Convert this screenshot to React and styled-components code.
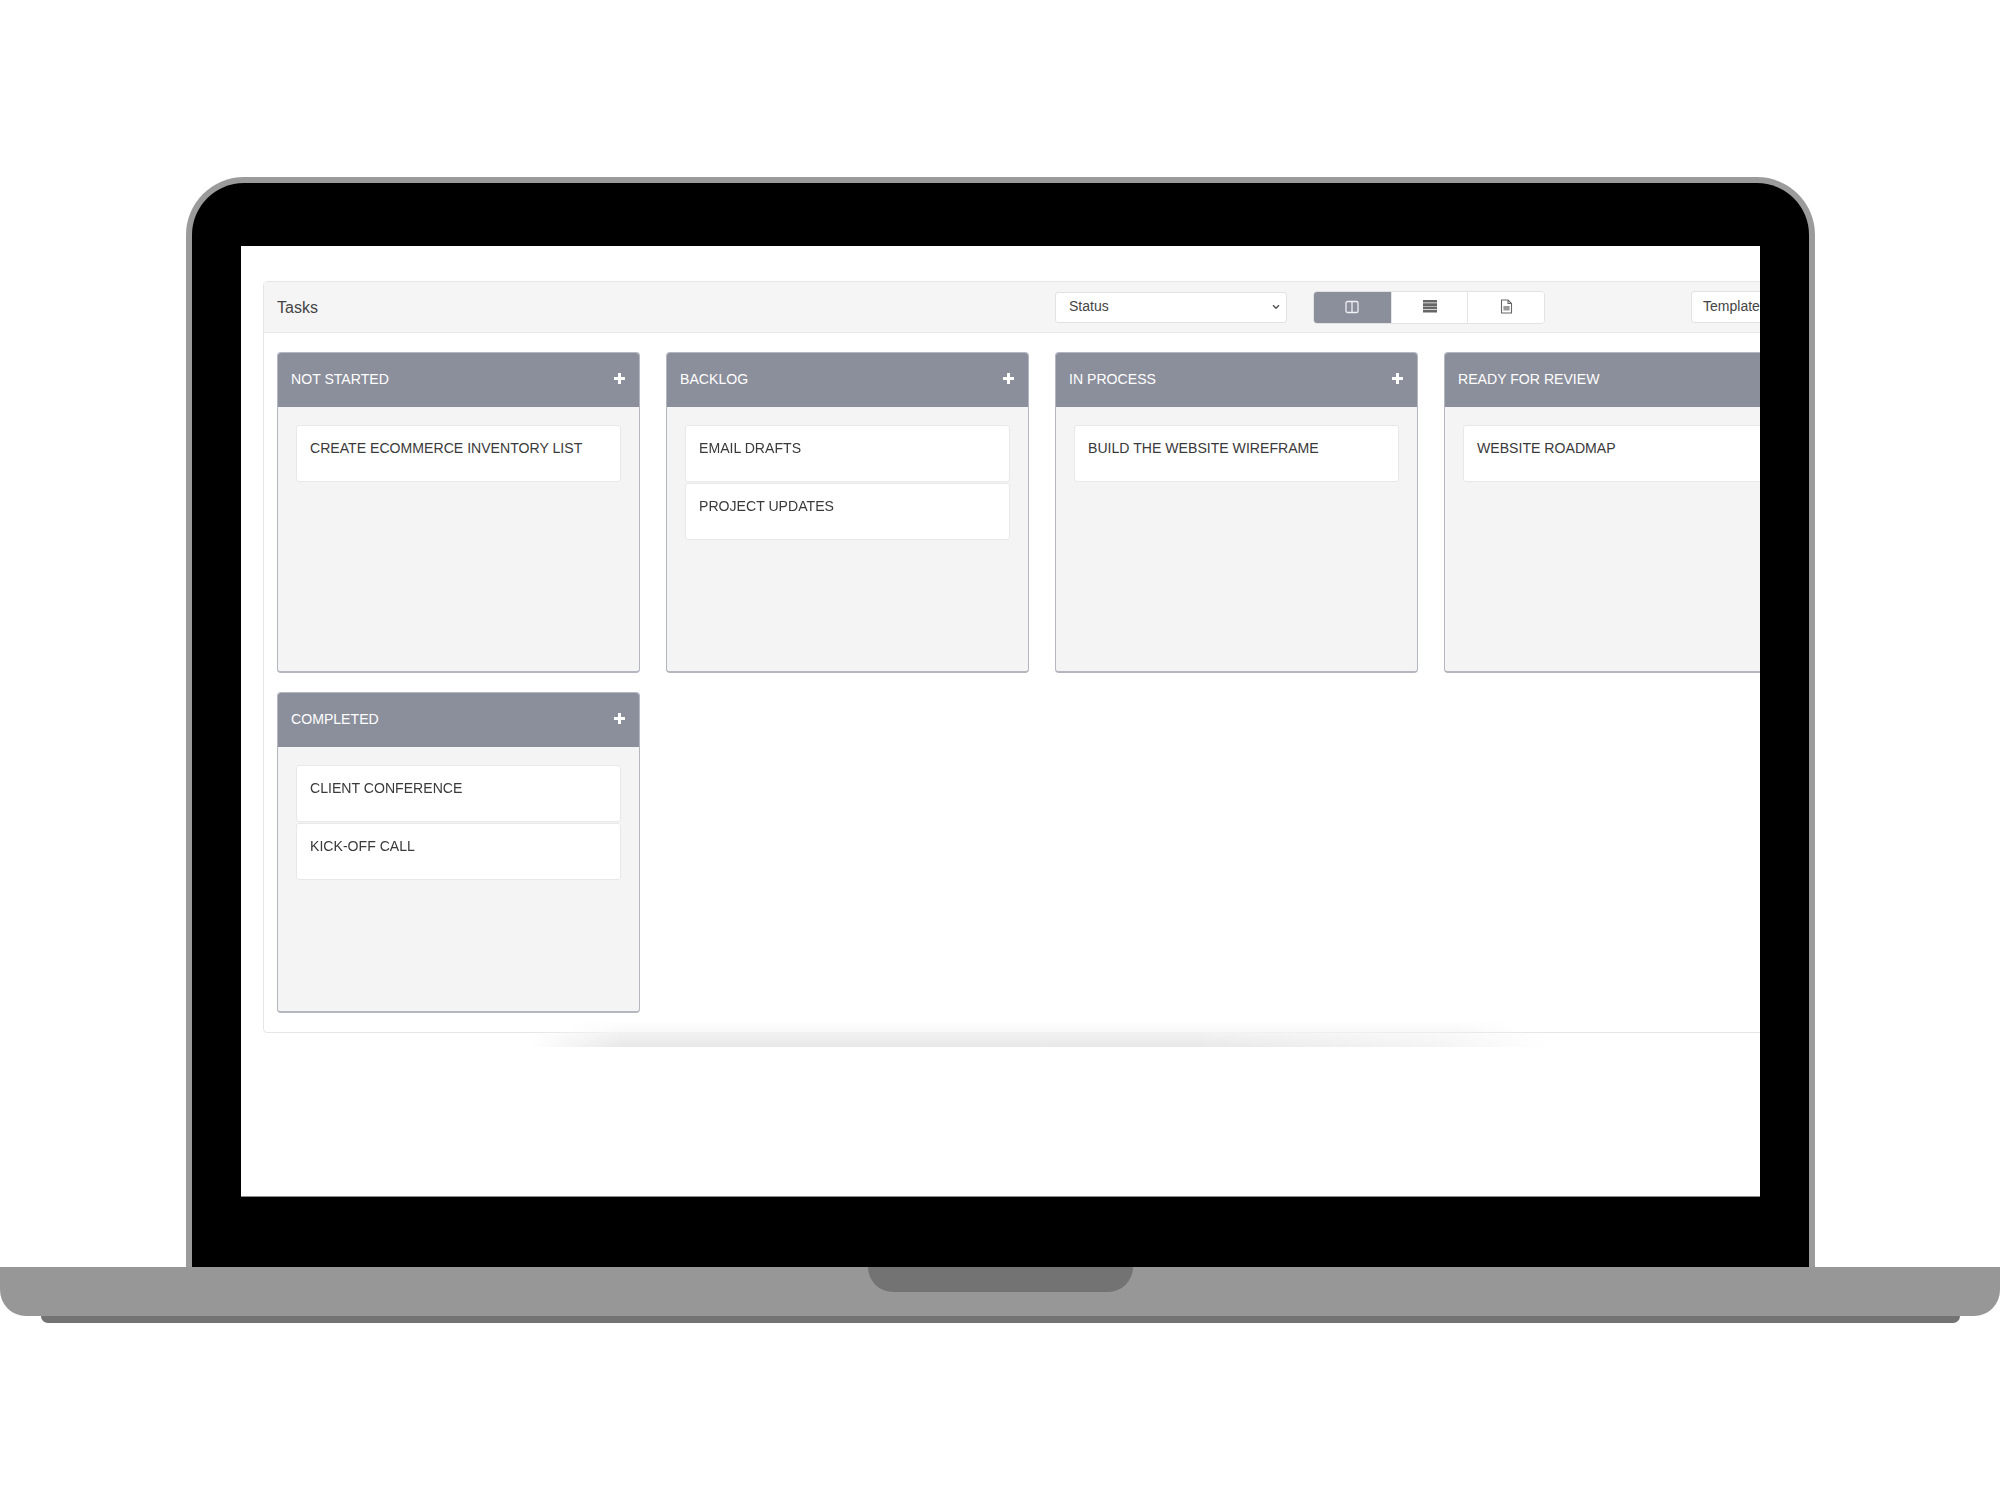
import React from 'react';
import styled, { createGlobalStyle } from 'styled-components';

const GlobalStyle = createGlobalStyle`
    html, body {
        margin: 0;
        padding: 0;
        background: #fff;
    }
    body {
        font-family: "Liberation Sans", Arial, sans-serif;
        color: #333;
    }
`;

const chevron = `url("data:image/svg+xml,%3Csvg xmlns='http://www.w3.org/2000/svg' width='8' height='6' viewBox='0 0 8 6'%3E%3Cpath d='M1 1.2l3 3 3-3' fill='none' stroke='%23555' stroke-width='1.5'/%3E%3C/svg%3E")`;

const Page = styled.div`
    width: 2000px;
    height: 1500px;
    padding-top: 177px;
    box-sizing: border-box;
    overflow: hidden;
`;
const Lid = styled.div`
    width: 1629px;
    height: 1090px;
    margin-left: 186px;
    box-sizing: border-box;
    padding: 63px 49px 0;
    background: #000;
    border: 6px solid #9b9b9b;
    border-bottom: 0;
    border-radius: 58px 58px 0 0;
`;
const Screen = styled.div`
    height: 951px;
    box-sizing: border-box;
    padding: 35px 0 0 22px;
    background: #fff;
    overflow: hidden;
    border-bottom: 1px solid #8d8d8d;
`;
const Panel = styled.section`
    position: relative;
    width: 1600px;
    box-sizing: border-box;
    border: 1px solid #e6e6e6;
    border-radius: 4px;
    filter: blur(0.35px);

    &::after {
        content: '';
        position: absolute;
        left: 266px;
        top: 100%;
        width: 1018px;
        height: 15px;
        background: linear-gradient(to bottom, #f3f3f3, #e8e8e8);
        mask-image: linear-gradient(to right, transparent, #000 9%, #000 65%, rgba(0, 0, 0, 0.45) 90%, transparent);
    }
    &::before {
        content: '';
        position: absolute;
        left: 300px;
        bottom: 0;
        width: 960px;
        height: 12px;
        background: linear-gradient(to bottom, transparent, #f8f8f8);
        mask-image: linear-gradient(to right, transparent, #000 7%, #000 93%, transparent);
    }
`;
const Toolbar = styled.header`
    display: flex;
    align-items: center;
    height: 50px;
    padding-left: 13px;
    background: #f5f5f5;
    border-bottom: 1px solid #e6e6e6;
`;
const Title = styled.h1`
    width: 778px;
    margin: 2px 0 0;
    font-size: 16px;
    font-weight: 400;
    color: #444;
`;
const StatusSelect = styled.select`
    width: 232px;
    height: 31px;
    padding: 0 6px 2px 13px;
    appearance: none;
    background: #fff ${chevron} no-repeat right 6px center;
    border: 1px solid #e2e2e2;
    border-radius: 3px;
    font-family: inherit;
    font-size: 14px;
    color: #444;
`;
const ViewGroup = styled.div`
    display: flex;
    margin-left: 26px;
    height: 31px;
    background: #fff;
    border: 1px solid #e2e2e2;
    border-radius: 4px;
    overflow: hidden;
`;
const ViewButton = styled.button`
    display: flex;
    align-items: center;
    justify-content: center;
    width: 76.7px;
    padding: 0 0 1px;
    border: 0;
    border-left: ${p => (p.$active ? '0' : '1px solid #e6e6e6')};
    background: ${p => (p.$active ? '#8b8e9b' : '#fff')};
    color: ${p => (p.$active ? '#eef0f4' : '#666')};
`;
const TemplateButton = styled.button`
    flex: none;
    width: 100px;
    height: 32px;
    margin-left: 146px;
    padding: 0 0 2px 11px;
    text-align: left;
    background: #fff;
    border: 1px solid #e2e2e2;
    border-radius: 3px;
    font-family: inherit;
    font-size: 14px;
    color: #444;
`;
const Board = styled.div`
    display: flex;
    flex-wrap: wrap;
    gap: 19.5px 26.5px;
    padding: 19px 13px 19.5px;
`;
const Column = styled.article`
    flex: none;
    width: 362.5px;
    height: 320.5px;
    box-sizing: border-box;
    background: #f4f4f4;
    border: 1px solid #b4b6c0;
    border-bottom-width: 2px;
    border-radius: 4px;
    overflow: hidden;
`;
const ColumnHead = styled.div`
    display: flex;
    align-items: center;
    justify-content: space-between;
    height: 55px;
    box-sizing: border-box;
    margin: -1px -1px 0;
    padding: 0 15px 2px 14px;
    background: #8b8e9b;
    font-size: 14.1px;
    color: #fff;
`;
const CardList = styled.div`
    display: flex;
    flex-direction: column;
    gap: 0.5px;
    padding: 18px 18px 0;
`;
const Card = styled.div`
    height: 57px;
    box-sizing: border-box;
    padding: 12px 13px 0;
    background: #fff;
    border: 1px solid #e8e8e8;
    border-radius: 3px;
    font-size: 14.1px;
    line-height: 20px;
    color: #3a3a3a;
`;
const Base = styled.div`
    display: flex;
    justify-content: center;
    height: 49px;
    background: #979797;
    border-radius: 0 0 26px 26px;
`;
const Notch = styled.div`
    width: 265px;
    height: 25px;
    background: #737373;
    border-radius: 0 0 25px 25px;
`;
const Foot = styled.div`
    height: 7px;
    margin: 0 40px 0 41px;
    background: #737373;
    border-radius: 0 0 7px 7px;
`;

const PlusIcon = () => (
    <svg width="11" height="11" viewBox="0 0 11 11" fill="none" stroke="#fff" strokeWidth="3">
        <path d="M5.5 0v11M0 5.5h11" />
    </svg>
);
const ColumnsIcon = () => (
    <svg width="14" height="14" viewBox="0 0 14 14" fill="none" stroke="currentColor" strokeWidth="1.3">
        <rect x="1" y="1.5" width="12" height="11" rx="1.6" />
        <path d="M7 1.5v11" />
    </svg>
);
const ListIcon = () => (
    <svg width="14" height="13" viewBox="0 0 14 13" fill="currentColor">
        <path d="M0 0h14v2.6H0zM0 3.3h14v2.6H0zM0 6.6h14v2.6H0zM0 9.9h14v2.6H0z" />
    </svg>
);
const FileIcon = () => (
    <svg width="13" height="15" viewBox="0 0 13 15" fill="none" stroke="currentColor" strokeWidth="1.1">
        <path d="M1.5 1h6.5l3.5 3.5V14h-10z" />
        <path d="M8 1v3.5h3.5" />
        <path d="M3.4 7h6.2v4.4H3.4z" fill="#999" stroke="none" />
    </svg>
);

const columns = [
    { name: 'NOT STARTED', cards: ['CREATE ECOMMERCE INVENTORY LIST'] },
    { name: 'BACKLOG', cards: ['EMAIL DRAFTS', 'PROJECT UPDATES'] },
    { name: 'IN PROCESS', cards: ['BUILD THE WEBSITE WIREFRAME'] },
    { name: 'READY FOR REVIEW', cards: ['WEBSITE ROADMAP'] },
    { name: 'COMPLETED', cards: ['CLIENT CONFERENCE', 'KICK-OFF CALL'] },
];

const App = () => {
    return (
        <Page>
            <GlobalStyle />
            <Lid>
                <Screen>
                    <Panel>
                        <Toolbar>
                            <Title>Tasks</Title>
                            <StatusSelect defaultValue="Status">
                                <option>Status</option>
                            </StatusSelect>
                            <ViewGroup>
                                <ViewButton $active><ColumnsIcon /></ViewButton>
                                <ViewButton><ListIcon /></ViewButton>
                                <ViewButton><FileIcon /></ViewButton>
                            </ViewGroup>
                            <TemplateButton>Templates</TemplateButton>
                        </Toolbar>
                        <Board>
                            {columns.map(col => (
                                <Column key={col.name}>
                                    <ColumnHead>
                                        {col.name}
                                        <PlusIcon />
                                    </ColumnHead>
                                    <CardList>
                                        {col.cards.map(card => <Card key={card}>{card}</Card>)}
                                    </CardList>
                                </Column>
                            ))}
                        </Board>
                    </Panel>
                </Screen>
            </Lid>
            <Base><Notch /></Base>
            <Foot />
        </Page>
    );
};

export default App;
